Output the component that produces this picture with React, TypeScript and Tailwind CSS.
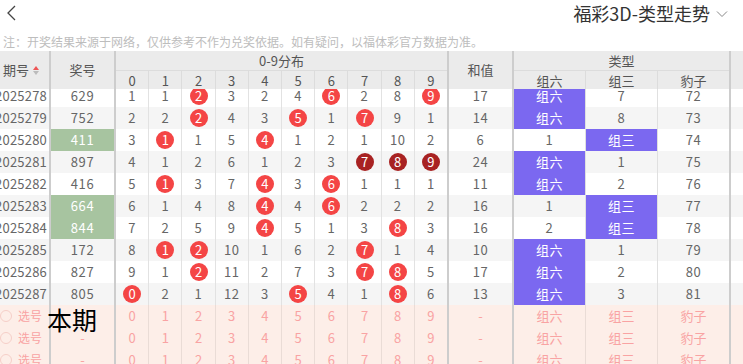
import React from 'react';

type Row = {
  id: string;
  num: string;
  green?: boolean;
  d: number[];
  hit: number[];
  dark?: boolean;
  sum: number;
  t: [string, string, string];
};

const rows: Row[] = [
  { id: '2025278', num: '629', d: [1, 1, 2, 3, 2, 4, 6, 2, 8, 9], hit: [2, 6, 9], sum: 17, t: ['组六', '7', '72'] },
  { id: '2025279', num: '752', d: [2, 2, 2, 4, 3, 5, 1, 7, 9, 1], hit: [2, 5, 7], sum: 14, t: ['组六', '8', '73'] },
  { id: '2025280', num: '411', green: true, d: [3, 1, 1, 5, 4, 1, 2, 1, 10, 2], hit: [1, 4], sum: 6, t: ['1', '组三', '74'] },
  { id: '2025281', num: '897', d: [4, 1, 2, 6, 1, 2, 3, 7, 8, 9], hit: [7, 8, 9], dark: true, sum: 24, t: ['组六', '1', '75'] },
  { id: '2025282', num: '416', d: [5, 1, 3, 7, 4, 3, 6, 1, 1, 1], hit: [1, 4, 6], sum: 11, t: ['组六', '2', '76'] },
  { id: '2025283', num: '664', green: true, d: [6, 1, 4, 8, 4, 4, 6, 2, 2, 2], hit: [4, 6], sum: 16, t: ['1', '组三', '77'] },
  { id: '2025284', num: '844', green: true, d: [7, 2, 5, 9, 4, 5, 1, 3, 8, 3], hit: [4, 8], sum: 16, t: ['2', '组三', '78'] },
  { id: '2025285', num: '172', d: [8, 1, 2, 10, 1, 6, 2, 7, 1, 4], hit: [1, 2, 7], sum: 10, t: ['组六', '1', '79'] },
  { id: '2025286', num: '827', d: [9, 1, 2, 11, 2, 7, 3, 7, 8, 5], hit: [2, 7, 8], sum: 17, t: ['组六', '2', '80'] },
  { id: '2025287', num: '805', d: [0, 2, 1, 12, 3, 5, 4, 1, 8, 6], hit: [0, 5, 8], sum: 13, t: ['组六', '3', '81'] },
];

const digits = [0, 1, 2, 3, 4, 5, 6, 7, 8, 9];

function DataRow({ r, i }: { r: Row; i: number }) {
  const bg = i % 2 === 0 ? 'bg-white' : 'bg-[#f5f5f5]';
  return (
    <div className={`flex h-[22px] text-[13px] text-[#666] tracking-[0.6px] ${bg}`}>
      <div className="w-[51px] shrink-0 border-r-2 border-[#cdcdcd] flex items-center justify-end pr-[2px] overflow-hidden whitespace-nowrap tracking-[0.2px]">
        {r.id}
      </div>
      <div
        className={`w-[65px] shrink-0 border-r-2 border-[#cdcdcd] flex items-center justify-center ${
          r.green ? 'bg-[#a7c4a0] text-white' : ''
        }`}
      >
        {r.num}
      </div>
      <div className="w-[333px] shrink-0 border-r-2 border-[#cdcdcd] flex">
        {r.d.map((v, k) => (
          <div key={k} className="flex-1 border-r border-[#e2e2e2] last:border-r-0 flex items-center justify-center">
            {r.hit.includes(k) ? (
              <span
                className={`w-[18px] h-[18px] rounded-full flex items-center justify-center text-white tracking-normal ${
                  r.dark ? 'bg-[#a82222]' : 'bg-[#f44545]'
                }`}
              >
                {k}
              </span>
            ) : (
              v
            )}
          </div>
        ))}
      </div>
      <div className="w-[65px] shrink-0 border-r-2 border-[#cdcdcd] flex items-center justify-center">{r.sum}</div>
      <div
        className={`w-[72px] shrink-0 border-r border-[#e0e0e0] flex items-center justify-center ${
          r.t[0] === '组六' ? 'bg-[#7b68f0] text-white' : ''
        }`}
      >
        {r.t[0]}
      </div>
      <div
        className={`w-[72px] shrink-0 border-r border-[#e0e0e0] flex items-center justify-center ${
          r.t[1] === '组三' ? 'bg-[#7b68f0] text-white' : ''
        }`}
      >
        {r.t[1]}
      </div>
      <div className="w-[73px] shrink-0 border-r-2 border-[#cdcdcd] flex items-center justify-center">{r.t[2]}</div>
      <div className="flex-1" />
    </div>
  );
}

function PickRow() {
  return (
    <div className="flex h-[22px] text-[13px] text-[#f9a3a3] bg-[#fdeee8]">
      <div className="w-[51px] shrink-0 border-r-2 border-[#cdcdcd] flex items-center gap-[6px]">
        <span className="w-[12px] h-[12px] rounded-full border border-[#f6cfc8] shrink-0" />
        <span className="text-[12px]">选号</span>
      </div>
      <div className="w-[65px] shrink-0 border-r-2 border-[#cdcdcd] flex items-center justify-center">-</div>
      <div className="w-[333px] shrink-0 border-r-2 border-[#cdcdcd] flex">
        {digits.map((k) => (
          <div key={k} className="flex-1 border-r border-[#eadcd6] last:border-r-0 flex items-center justify-center">
            {k}
          </div>
        ))}
      </div>
      <div className="w-[65px] shrink-0 border-r-2 border-[#cdcdcd] flex items-center justify-center">-</div>
      <div className="w-[72px] shrink-0 border-r border-[#eadcd6] flex items-center justify-center">组六</div>
      <div className="w-[72px] shrink-0 border-r border-[#eadcd6] flex items-center justify-center">组三</div>
      <div className="w-[73px] shrink-0 border-r-2 border-[#cdcdcd] flex items-center justify-center">豹子</div>
      <div className="flex-1" />
    </div>
  );
}

export default function App() {
  return (
    <div className="relative w-[743px] h-[364px] overflow-hidden bg-white font-['Noto_Sans_CJK_SC',sans-serif]">
      {/* top bar */}
      <div className="h-[32px] flex items-center justify-between pl-[6px] pr-[15px]">
        <svg width="11" height="18" viewBox="0 0 11 18" className="mb-[4px]">
          <polyline points="9,1 2,8 9,15" fill="none" stroke="#444" strokeWidth="1.3" />
        </svg>
        <div className="flex items-center gap-[6px] mb-[7px]">
          <span className="text-[18px] text-[#333] leading-none">福彩3D-类型走势</span>
          <svg width="12" height="8" viewBox="0 0 12 8" className="mt-[2px]">
            <polyline points="1,1.5 6,6.5 11,1.5" fill="none" stroke="#888" strokeWidth="1" />
          </svg>
        </div>
      </div>

      {/* note */}
      <div className="h-[19px] leading-[19px] pl-[3px] text-[12px] text-[#bdbdbd] whitespace-nowrap">
        注：开奖结果来源于网络，仅供参考不作为兑奖依据。如有疑问，以福体彩官方数据为准。
      </div>

      {/* table header */}
      <div className="flex h-[38px] bg-[#ebebeb] text-[13px] text-[#555]">
        <div className="w-[51px] shrink-0 border-r-2 border-[#cdcdcd] flex items-center pl-[3px] gap-[4px]">
          <span>期号</span>
          <span className="flex flex-col gap-[1px]">
            <span className="w-0 h-0 border-l-[3px] border-r-[3px] border-b-[4px] border-l-transparent border-r-transparent border-b-[#e55]" />
            <span className="w-0 h-0 border-l-[3px] border-r-[3px] border-t-[4px] border-l-transparent border-r-transparent border-t-[#bbb]" />
          </span>
        </div>
        <div className="w-[65px] shrink-0 border-r-2 border-[#cdcdcd] flex items-center justify-center">奖号</div>
        <div className="w-[333px] shrink-0 border-r-2 border-[#cdcdcd] flex flex-col">
          <div className="h-[20px] flex items-center justify-center border-b border-[#dcdcdc]">0-9分布</div>
          <div className="flex-1 flex">
            {digits.map((k) => (
              <div key={k} className="flex-1 border-r border-[#dcdcdc] last:border-r-0 flex items-center justify-center">
                {k}
              </div>
            ))}
          </div>
        </div>
        <div className="w-[65px] shrink-0 border-r-2 border-[#cdcdcd] flex items-center justify-center">和值</div>
        <div className="w-[217px] shrink-0 border-r-2 border-[#cdcdcd] flex flex-col">
          <div className="h-[20px] flex items-center justify-center border-b border-[#dcdcdc]">类型</div>
          <div className="flex-1 flex">
            <div className="w-[72px] border-r border-[#dcdcdc] flex items-center justify-center">组六</div>
            <div className="w-[72px] border-r border-[#dcdcdc] flex items-center justify-center">组三</div>
            <div className="flex-1 flex items-center justify-center">豹子</div>
          </div>
        </div>
        <div className="flex-1" />
      </div>

      {/* table body */}
      <div className="h-[275px] overflow-hidden">
        <div className="-mt-[4px]">
          {rows.map((r, i) => (
            <DataRow key={r.id} r={r} i={i} />
          ))}
          <PickRow />
          <PickRow />
          <PickRow />
        </div>
      </div>

      <span className="absolute left-[47px] top-[307px] text-[25px] leading-none text-black">本期</span>
    </div>
  );
}
